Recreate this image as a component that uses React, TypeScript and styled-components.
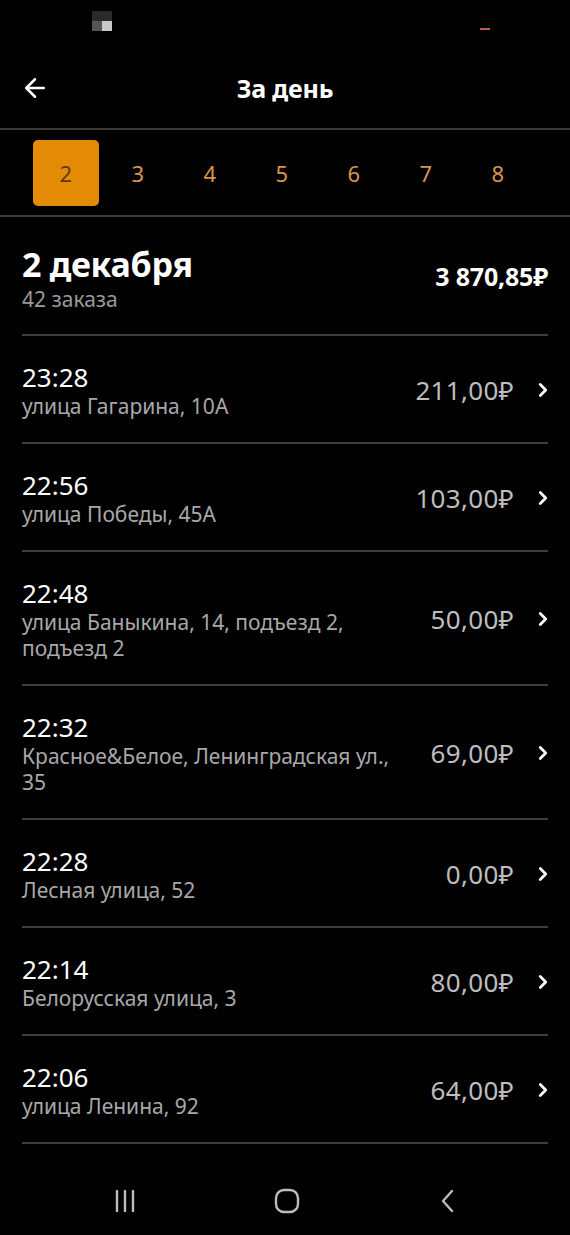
import styled, { createGlobalStyle } from "styled-components";
import { ArrowLeft, ChevronRight } from "lucide-react";

const GlobalStyle = createGlobalStyle`
  html, body {
    margin: 0;
    padding: 0;
    background: #000000;
  }
  body {
    font-family: "Noto Sans", "Open Sans", sans-serif;
    color: #ffffff;
  }
`;

const Screen = styled.div`
  width: 570px;
  height: 1235px;
  background: #000000;
  display: flex;
  flex-direction: column;
  overflow: hidden;
`;

const StatusBar = styled.div`
  height: 48px;
  display: flex;
  justify-content: space-between;
  align-items: flex-start;
  padding: 11px 80px 0 92px;
  box-sizing: border-box;
`;

const StatusIcon = styled.div`
  width: 20px;
  height: 20px;
  display: grid;
  grid-template-columns: 1fr 1fr;
  grid-template-rows: 1fr 1fr;
  div:nth-child(1), div:nth-child(2) { background: #2a2a2a; }
  div:nth-child(3) { background: #555555; }
  div:nth-child(4) { background: #c8c8c8; }
`;

const Battery = styled.div`
  width: 10px;
  height: 2px;
  margin-top: 17px;
  background: #c0525a;
`;

const Header = styled.div`
  height: 82px;
  display: flex;
  align-items: center;
  position: relative;
  justify-content: center;
  border-bottom: 2px solid #3a3a3a;
`;

const BackButton = styled.div`
  position: absolute;
  left: 20px;
  top: 50%;
  transform: translateY(-50%);
  display: flex;
  color: #ffffff;
`;

const Title = styled.h1`
  margin: 0;
  font-size: 25px;
  font-weight: 700;
  letter-spacing: -0.2px;
`;

const Tabs = styled.div`
  height: 88px;
  display: flex;
  align-items: center;
  padding: 0 33px;
  border-bottom: 2px solid #3a3a3a;
  box-sizing: border-box;
`;

const Tab = styled.div<{ $active?: boolean }>`
  width: 67px;
  height: 66px;
  margin-right: 6.5px;
  border-radius: 5px;
  display: flex;
  align-items: center;
  justify-content: center;
  font-size: 22px;
  background: ${(p) => (p.$active ? "#e38b05" : "transparent")};
  color: ${(p) => (p.$active ? "#5e3a0a" : "#d9954a")};
`;

const Content = styled.div`
  padding: 0 22px;
  flex: 1;
`;

const DayRow = styled.div`
  display: flex;
  justify-content: space-between;
  align-items: flex-start;
  padding: 26px 0 22px;
  border-bottom: 2px solid #3e3e3e;
`;

const DayTitle = styled.div`
  font-size: 34px;
  font-weight: 700;
  line-height: 42px;
  letter-spacing: -0.3px;
`;

const DaySub = styled.div`
  font-size: 21px;
  color: #9a9a9a;
  line-height: 26px;
  margin-top: 1px;
`;

const DayTotal = styled.div`
  font-size: 25px;
  font-weight: 700;
  line-height: 30px;
  margin-top: 18px;
  letter-spacing: -0.2px;
`;

const OrderRow = styled.div`
  display: flex;
  align-items: center;
  justify-content: space-between;
  padding: 25px 0 23px;
  border-bottom: 2px solid #3e3e3e;
`;

const OrderInfo = styled.div`
  display: flex;
  flex-direction: column;
  max-width: 385px;
`;

const Time = styled.div`
  font-size: 26px;
  line-height: 32px;
  color: #ffffff;
`;

const Address = styled.div`
  font-size: 21px;
  line-height: 26px;
  color: #a8a8a8;
`;

const PriceBox = styled.div`
  display: flex;
  align-items: center;
  gap: 18px;
  margin-right: -6px;
`;

const Price = styled.div`
  font-size: 26px;
  color: #bdbdbd;
  letter-spacing: 0.3px;
`;

const NavBar = styled.div`
  height: 92px;
  display: flex;
  justify-content: space-between;
  align-items: center;
  padding: 22px 108px 0 112px;
  box-sizing: border-box;
`;

const orders = [
  { time: "23:28", address: "улица Гагарина, 10А", price: "211,00₽" },
  { time: "22:56", address: "улица Победы, 45А", price: "103,00₽" },
  { time: "22:48", address: "улица Баныкина, 14, подъезд 2, подъезд 2", price: "50,00₽" },
  { time: "22:32", address: "Красное&Белое, Ленинградская ул., 35", price: "69,00₽" },
  { time: "22:28", address: "Лесная улица, 52", price: "0,00₽" },
  { time: "22:14", address: "Белорусская улица, 3", price: "80,00₽" },
  { time: "22:06", address: "улица Ленина, 92", price: "64,00₽" },
];

const days = [2, 3, 4, 5, 6, 7, 8];

const App = () => {
  return (
    <Screen>
      <GlobalStyle />
      <StatusBar>
        <StatusIcon>
          <div />
          <div />
          <div />
          <div />
        </StatusIcon>
        <Battery />
      </StatusBar>
      <Header>
        <BackButton>
          <ArrowLeft size={30} strokeWidth={2} />
        </BackButton>
        <Title>За день</Title>
      </Header>
      <Tabs>
        {days.map((d) => (
          <Tab key={d} $active={d === 2}>
            {d}
          </Tab>
        ))}
      </Tabs>
      <Content>
        <DayRow>
          <div>
            <DayTitle>2 декабря</DayTitle>
            <DaySub>42 заказа</DaySub>
          </div>
          <DayTotal>3 870,85₽</DayTotal>
        </DayRow>
        {orders.map((o) => (
          <OrderRow key={o.time}>
            <OrderInfo>
              <Time>{o.time}</Time>
              <Address>{o.address}</Address>
            </OrderInfo>
            <PriceBox>
              <Price>{o.price}</Price>
              <ChevronRight size={22} strokeWidth={3} color="#ffffff" />
            </PriceBox>
          </OrderRow>
        ))}
      </Content>
      <NavBar>
        <svg width="26" height="26" viewBox="0 0 26 26">
          <g stroke="#bdbdbd" strokeWidth="2.4" strokeLinecap="round">
            <line x1="5" y1="3" x2="5" y2="23" />
            <line x1="13" y1="3" x2="13" y2="23" />
            <line x1="21" y1="3" x2="21" y2="23" />
          </g>
        </svg>
        <svg width="26" height="26" viewBox="0 0 26 26">
          <rect x="2" y="2" width="22" height="22" rx="8" fill="none" stroke="#bdbdbd" strokeWidth="2.4" />
        </svg>
        <svg width="26" height="26" viewBox="0 0 26 26">
          <polyline points="16,3 7,13 16,23" fill="none" stroke="#bdbdbd" strokeWidth="2.4" strokeLinecap="round" strokeLinejoin="round" />
        </svg>
      </NavBar>
    </Screen>
  );
};

export default App;
